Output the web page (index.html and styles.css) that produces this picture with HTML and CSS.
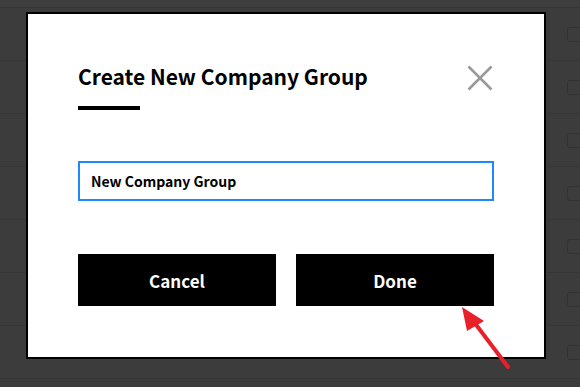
FILE: index.html
```html
<!DOCTYPE html>
<html>
<head>
<meta charset="utf-8">
<link rel="stylesheet" href="styles.css">
</head>
<body>
<div class="page">
  <div class="list">
    <div class="list-head"></div>
    <div class="row"><span class="check"></span></div>
    <div class="row"><span class="check"></span></div>
    <div class="row"><span class="check"></span></div>
    <div class="row"><span class="check"></span></div>
    <div class="row"><span class="check"></span></div>
    <div class="row"><span class="check"></span></div>
    <div class="row"><span class="check"></span></div>
    <div class="row row-last"></div>
  </div>

  <div class="modal">
    <div class="modal-head">
      <div class="title-wrap">
        <h2 class="title">Create New Company Group</h2>
        <div class="title-bar"></div>
      </div>
      <button class="close" aria-label="Close">
        <svg width="26" height="26" viewBox="0 0 26 26"><path d="M1.5 1.5 L24.5 24.5 M24.5 1.5 L1.5 24.5" stroke="#999" stroke-width="2.6" fill="none"/></svg>
      </button>
    </div>
    <div class="field">
      <input class="input" type="text" value="New Company Group">
    </div>
    <div class="actions">
      <button class="btn">Cancel</button>
      <button class="btn">Done</button>
    </div>
  </div>

  <svg class="arrow" width="580" height="387" viewBox="0 0 580 387">
    <line x1="508" y1="367" x2="474" y2="322" stroke="#e8202a" stroke-width="4" stroke-linecap="round"/>
    <polygon points="462,307 484,321 467,331" fill="#e8202a"/>
  </svg>
</div>
</body>
</html>
```

FILE: styles.css
```css
* { box-sizing: border-box; }
html, body { margin: 0; padding: 0; }
body {
  background: #3c3c3c;
  font-family: "Noto Sans CJK KR", "Noto Sans", sans-serif;
}
.page {
  position: relative;
  width: 580px;
  height: 387px;
  overflow: hidden;
}
.list-head {
  height: 7px;
  background: #3e3e3e;
}
.row {
  height: 53px;
  border-top: 1px solid #363636;
  display: flex;
  justify-content: flex-end;
  padding-top: 19px;
}
.row-last {
  height: 9px;
}
.check {
  width: 20px;
  height: 15px;
  margin-right: -7px;
  border: 1px solid #323232;
  border-radius: 3px;
}
.modal {
  position: absolute;
  left: 26px;
  top: 12px;
  width: 520px;
  height: 347px;
  background: #fff;
  border: 2px solid #000;
  padding: 0 50px;
}
.modal-head {
  display: flex;
  justify-content: space-between;
  align-items: flex-start;
  padding-top: 49px;
}
.title {
  margin: 0;
  font-size: 21px;
  font-weight: 700;
  line-height: 26px;
  color: #000;
}
.title-bar {
  width: 62px;
  height: 4px;
  background: #000;
  margin-top: 17px;
}
.close {
  border: 0;
  background: none;
  padding: 0;
  margin-top: 2px;
  margin-right: 1px;
  width: 26px;
  height: 26px;
  display: block;
}
.close svg { display: block; }
.field {
  margin-top: 51px;
}
.input {
  display: block;
  width: 416px;
  height: 40px;
  border: 2px solid #1e88ff;
  padding: 0 11px;
  font-family: inherit;
  font-size: 14px;
  font-weight: 700;
  color: #000;
  outline: none;
}
.actions {
  display: flex;
  gap: 20px;
  margin-top: 53px;
}
.btn {
  width: 198px;
  height: 52px;
  background: #000;
  color: #fff;
  border: 0;
  font-family: inherit;
  font-size: 17px;
  font-weight: 700;
}
.arrow {
  position: absolute;
  left: 0;
  top: 0;
  pointer-events: none;
}
```
